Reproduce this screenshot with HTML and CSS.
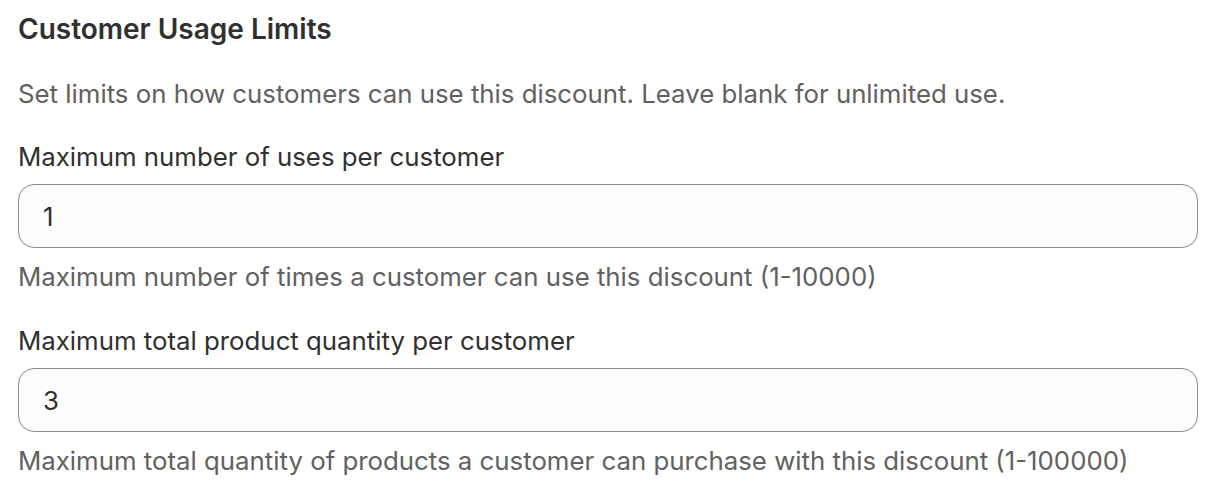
FILE: index.html
```html
<!DOCTYPE html>
<html>
<head>
<meta charset="utf-8">
<link rel="stylesheet" href="styles.css">
</head>
<body>
<section class="card">
  <h2 class="title">Customer Usage Limits</h2>
  <p class="desc">Set limits on how customers can use this discount. Leave blank for unlimited use.</p>
  <div class="fields">
    <div class="field">
      <label class="label" for="uses">Maximum number of uses per customer</label>
      <input class="input" id="uses" type="text" value="1">
      <div class="help">Maximum number of times a customer can use this discount (1-10000)</div>
    </div>
    <div class="field">
      <label class="label" for="qty">Maximum total product quantity per customer</label>
      <input class="input" id="qty" type="text" value="3">
      <div class="help">Maximum total quantity of products a customer can purchase with this discount (1-100000)</div>
    </div>
  </div>
</section>
</body>
</html>
```
FILE: styles.css
```css
* { box-sizing: border-box; }
html, body { margin: 0; background: #ffffff; }
body {
  font-family: Inter, "Noto Sans", sans-serif;
  color: #303030;
  font-size: 25.8px;
  line-height: 40px;
}
.card {
  padding: 9px 26px 0 18px;
}
.title {
  margin: 0;
  font-size: 28px;
  font-weight: 600;
  line-height: 40px;
  color: #303030;
}
.desc {
  margin: 25px 0 0;
  color: #616161;
}
.fields {
  margin-top: 23px;
  display: flex;
  flex-direction: column;
  gap: 24px;
}
.field {
  display: flex;
  flex-direction: column;
}
.label { color: #303030; }
.input {
  margin-top: 7px;
  height: 64px;
  border: 1.5px solid #8a8a8a;
  border-radius: 16px;
  background: #fdfdfd;
  font: inherit;
  color: #303030;
  padding: 0 24px;
  width: 100%;
}
.help {
  margin-top: 9px;
  color: #616161;
}
```
